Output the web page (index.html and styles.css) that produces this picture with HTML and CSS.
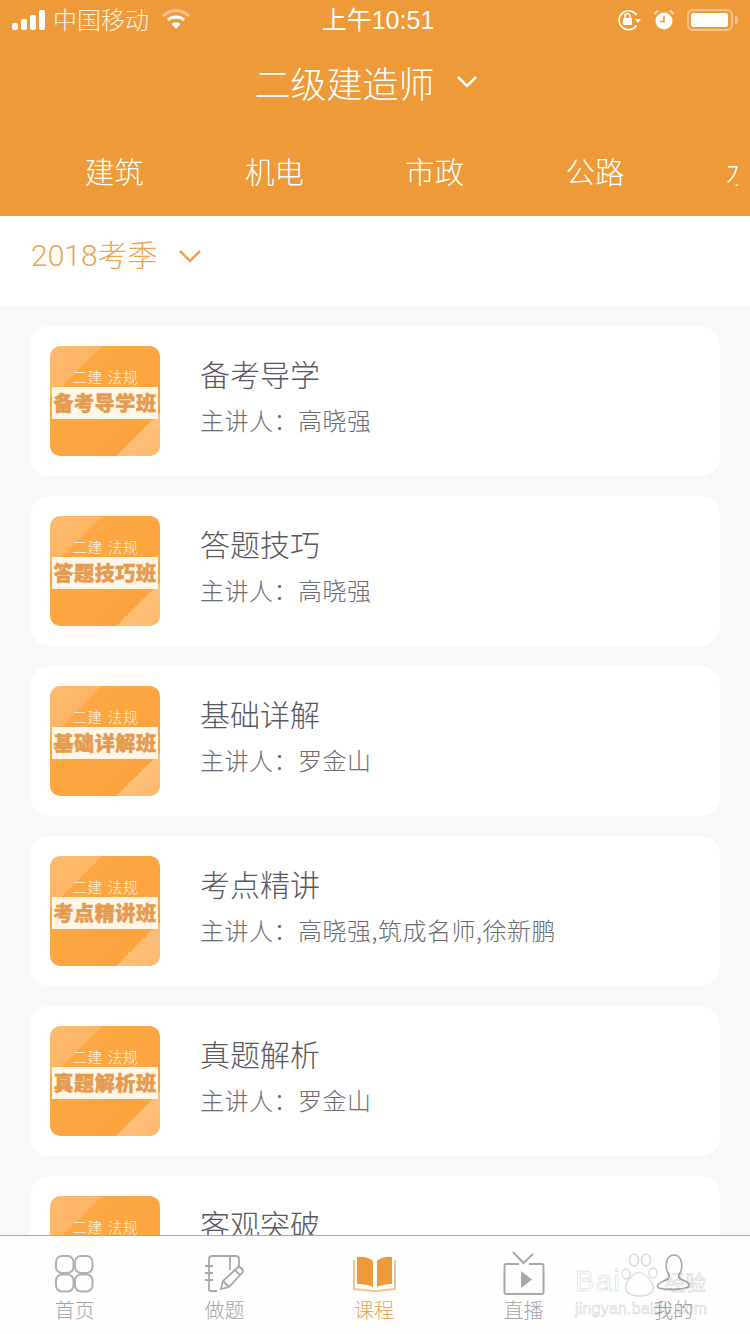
FILE: index.html
```html
<!DOCTYPE html>
<html>
  <head>
    <meta charset="UTF-8">
    <title>课程</title>
    <link rel="stylesheet" href="styles.css">
  </head>
  <body>
    <div class="page">
      <!-- Header -->
      <div class="header">
        <div class="status-bar">
          <div class="status-left">
            <svg class="signal" width="34" height="20" viewBox="0 0 34 20">
              <rect x="0" y="13" width="6" height="7" rx="2" fill="#fff"/>
              <rect x="9" y="9" width="6" height="11" rx="2" fill="#fff"/>
              <rect x="18" y="5" width="6" height="15" rx="2" fill="#fff"/>
              <rect x="27" y="0" width="6" height="20" rx="2" fill="#fff"/>
            </svg>
            <span class="carrier">中国移动</span>
            <svg class="wifi" width="28" height="22" viewBox="0 0 28 22">
              <path d="M1 7 C8 0 20 0 27 7" fill="none" stroke="#f6c491" stroke-width="3"/>
              <path d="M6 11 C10 7 18 7 22 11" fill="none" stroke="#fff" stroke-width="3"/>
              <path d="M9.500 15 C12 12.500 16 12.500 18.500 15 L14 20 Z" fill="#fff"/>
            </svg>
          </div>
          <div class="status-time">上午10:51</div>
          <div class="status-right">
            <svg width="24" height="24" viewBox="0 0 24 24">
              <path d="M19.500 7 A9.500 9.500 0 1 0 19.500 17.500" fill="none" stroke="#fff" stroke-width="1.600"/>
              <path d="M18 11 L24 11 L21 15 Z" fill="#fff"/>
              <rect x="6" y="10" width="9" height="7" rx="1" fill="#fff"/>
              <path d="M8 10 V8 A2.500 2.500 0 0 1 13 8 V10" fill="none" stroke="#fff" stroke-width="1.500"/>
            </svg>
            <svg width="22" height="22" viewBox="0 0 22 22">
              <circle cx="11" cy="12" r="8.500" fill="#fff"/>
              <path d="M11 7 V12.500 H7" fill="none" stroke="#ee9a38" stroke-width="1.600"/>
              <path d="M1.500 5 L5 1.500 M20.500 5 L17 1.500" stroke="#fbe3c8" stroke-width="2"/>
            </svg>
            <div class="battery"><div class="battery-fill"></div></div>
            <div class="battery-tip"></div>
          </div>
        </div>

        <div class="title-row">
          <span class="title">二级建造师</span>
          <svg class="title-arrow" width="22" height="14" viewBox="0 0 22 14">
            <path d="M2 2 L11 11 L20 2" fill="none" stroke="#fff" stroke-width="2.500"/>
          </svg>
        </div>

        <div class="tabs">
          <div class="tab">建筑</div>
          <div class="tab">机电</div>
          <div class="tab">市政</div>
          <div class="tab">公路</div>
          <div class="tab">水利</div>
        </div>
      </div>

      <!-- Season select -->
      <div class="season">
        <span class="season-text">2018考季</span>
        <svg width="24" height="14" viewBox="0 0 24 14">
          <path d="M2 2 L12 12 L22 2" fill="none" stroke="#eba450" stroke-width="2.500"/>
        </svg>
      </div>

      <!-- Course list -->
      <div class="list">
        <div class="card">
          <div class="thumb">
            <div class="thumb-top">二建 法规</div>
            <div class="thumb-band">备考导学班</div>
          </div>
          <div class="info">
            <div class="info-title">备考导学</div>
            <div class="info-sub">主讲人：高晓强</div>
          </div>
        </div>
        <div class="card">
          <div class="thumb">
            <div class="thumb-top">二建 法规</div>
            <div class="thumb-band">答题技巧班</div>
          </div>
          <div class="info">
            <div class="info-title">答题技巧</div>
            <div class="info-sub">主讲人：高晓强</div>
          </div>
        </div>
        <div class="card">
          <div class="thumb">
            <div class="thumb-top">二建 法规</div>
            <div class="thumb-band">基础详解班</div>
          </div>
          <div class="info">
            <div class="info-title">基础详解</div>
            <div class="info-sub">主讲人：罗金山</div>
          </div>
        </div>
        <div class="card">
          <div class="thumb">
            <div class="thumb-top">二建 法规</div>
            <div class="thumb-band">考点精讲班</div>
          </div>
          <div class="info">
            <div class="info-title">考点精讲</div>
            <div class="info-sub">主讲人：高晓强,筑成名师,徐新鹏</div>
          </div>
        </div>
        <div class="card">
          <div class="thumb">
            <div class="thumb-top">二建 法规</div>
            <div class="thumb-band">真题解析班</div>
          </div>
          <div class="info">
            <div class="info-title">真题解析</div>
            <div class="info-sub">主讲人：罗金山</div>
          </div>
        </div>
        <div class="card">
          <div class="thumb">
            <div class="thumb-top">二建 法规</div>
            <div class="thumb-band">客观突破班</div>
          </div>
          <div class="info">
            <div class="info-title">客观突破</div>
            <div class="info-sub">主讲人：高晓强</div>
          </div>
        </div>
      </div>

      <!-- Bottom nav -->
      <div class="nav">
        <div class="nav-item">
          <svg width="44" height="44" viewBox="0 0 44 44" fill="none" stroke="#b0b0b2" stroke-width="2">
            <rect x="3" y="5" width="17.500" height="17" rx="6"/>
            <rect x="22" y="5" width="17.500" height="17" rx="6"/>
            <rect x="3" y="23.500" width="17.500" height="17" rx="6"/>
            <rect x="22" y="23.500" width="17.500" height="17" rx="6"/>
          </svg>
          <span>首页</span>
        </div>
        <div class="nav-item">
          <svg width="44" height="44" viewBox="0 0 44 44" fill="none" stroke="#a8a8aa" stroke-width="1.800">
            <path d="M7 39 V8 Q7 5 10 5 H34 Q37 5 37 8 V16"/>
            <path d="M7 39 Q7 40 9 40 H15"/>
            <path d="M3 15 H11 M3 22 H11 M3 29 H11"/>
            <path d="M28 5 V19"/>
            <path d="M19 38 L21 30 L35 17 Q37 15 39 17 L40 18 Q42 20 40 22 L27 36 Z"/>
            <path d="M21 30 L27 36 M33 19 L38 24"/>
          </svg>
          <span>做题</span>
        </div>
        <div class="nav-item active">
          <svg width="44" height="44" viewBox="0 0 44 44">
            <path d="M2 9 V38 L21 40 H25 L43 38 V9" fill="none" stroke="#f3c68d" stroke-width="2"/>
            <path d="M5 6 Q15 5 21 10 V36 Q15 33 5 33 Z" fill="#ee9a38"/>
            <path d="M25 10 Q31 5 40 6 V33 Q31 33 25 36 Z" fill="#ee9a38"/>
          </svg>
          <span>课程</span>
        </div>
        <div class="nav-item">
          <svg width="44" height="44" viewBox="0 0 44 44" fill="none" stroke="#a8a8aa" stroke-width="2">
            <path d="M11 1 L21.500 12 L31 3"/>
            <path d="M17 13 H4 Q2.500 13 2.500 15 V41 Q2.500 43 4 43 H40 Q41.500 43 41.500 41 V15 Q41.500 13 40 13 H27"/>
            <path d="M19 20 L30 28.500 L19 37 Z" fill="#a8a8aa" stroke="none"/>
          </svg>
          <span>直播</span>
        </div>
        <div class="nav-item">
          <svg width="44" height="44" viewBox="0 0 44 44" fill="none" stroke="#a8a8aa" stroke-width="1.600">
            <path d="M18 24 C13 16 15 4 23 4 C31 4 33 16 28 24 C27 27 29 28 32 29 C37 31 40 34 37 36 C30 39 14 39 8 37 C4 35 9 31 15 29 C18 28 19 27 18 24 Z"/>
          </svg>
          <span>我的</span>
        </div>
      </div>

      <!-- Watermark -->
      <div class="watermark">
        <div class="wm-logo">
          <span class="wm-bai">Bai</span>
          <svg class="wm-paw" width="38" height="46" viewBox="0 0 38 46">
            <g fill="none" stroke="#d9d9d9" stroke-width="1.300">
              <ellipse cx="6" cy="22" rx="4" ry="5"/>
              <ellipse cx="14" cy="8" rx="4.500" ry="6"/>
              <ellipse cx="26" cy="8" rx="4.500" ry="6"/>
              <ellipse cx="33" cy="21" rx="4" ry="5"/>
              <path d="M19 20 C12 22 4 31 6 38 C9 46 30 46 33 38 C35 31 26 22 19 20 Z"/>
            </g>
            <text x="19" y="39" text-anchor="middle" class="wm-du">du</text>
          </svg>
          <span class="wm-cn">经验</span>
        </div>
        <div class="wm-url">jingyan.baidu.com</div>
      </div>
    </div>
  </body>
</html>
```

FILE: styles.css
```css
html,
body {
  margin: 0;
  padding: 0;
}
body {
  font-family: "Noto Sans CJK SC", "Liberation Sans", sans-serif;
  font-weight: 300;
  background-color: #f8f7fa;
}
.page {
  position: relative;
  width: 750px;
  height: 1334px;
  overflow: hidden;
  display: flex;
  flex-direction: column;
}

/* Header */
.header {
  background-color: #ee9a38;
  color: #fff;
  height: 216px;
  flex-shrink: 0;
}
.status-bar {
  height: 40px;
  display: flex;
  align-items: center;
  justify-content: space-between;
  padding: 0 12px;
  position: relative;
}
.status-left,
.status-right {
  display: flex;
  align-items: center;
}
.carrier {
  font-size: 24px;
  line-height: 40px;
  margin-left: 7px;
  color: #fdf1e2;
  position: relative;
  top: -1px;
}
.wifi {
  margin-left: 13px;
}
.status-time {
  position: absolute;
  left: 0;
  right: 0;
  text-align: center;
  font-family: "Liberation Sans", "Noto Sans CJK SC", sans-serif;
  font-weight: 400;
  font-size: 25px;
  line-height: 40px;
  padding-left: 6px;
}
.status-right {
  gap: 12px;
}
.battery {
  box-sizing: border-box;
  width: 46px;
  height: 22px;
  border: 2px solid #f6c491;
  border-radius: 6px;
  padding: 2px 3px 2px 2px;
}
.battery-fill {
  width: 100%;
  height: 100%;
  background-color: #fff;
  border-radius: 2px;
}
.battery-tip {
  width: 3px;
  height: 8px;
  background-color: #f6c491;
  border-radius: 0 2px 2px 0;
  margin-left: -10px;
}
.title-row {
  box-sizing: border-box;
  height: 88px;
  display: flex;
  align-items: center;
  justify-content: center;
  padding: 0 18px 4px 0;
}
.title {
  font-size: 36px;
  line-height: 84px;
  margin-right: 21px;
}
.tabs {
  display: flex;
  height: 88px;
  margin-right: 12px;
  padding-left: 34px;
  overflow: hidden;
}
.tab {
  flex: 0 0 160.300px;
  text-align: center;
  font-size: 29.500px;
  line-height: 85px;
}

/* Season */
.season {
  box-sizing: border-box;
  height: 90px;
  flex-shrink: 0;
  background-color: #fff;
  color: #eba450;
  display: flex;
  align-items: center;
  padding: 0 0 10px 31px;
  gap: 20px;
}
.season-text {
  font-family: Roboto, "Noto Sans CJK SC", sans-serif;
  font-size: 30px;
  line-height: 40px;
}

/* List */
.list {
  padding: 20px 30px 0;
  display: flex;
  flex-direction: column;
  gap: 20px;
}
.card {
  height: 150px;
  flex-shrink: 0;
  background-color: #fff;
  border-radius: 20px;
  display: flex;
  align-items: center;
  padding-left: 20px;
}
.thumb {
  width: 110px;
  height: 110px;
  border-radius: 10px;
  flex-shrink: 0;
  overflow: hidden;
  background: linear-gradient(135deg, #fdbb6e 0, #fdb565 24%, #fda844 24%, #fca33e 80%, #fdbf78 80%, #fdb96c 100%);
  display: flex;
  flex-direction: column;
  align-items: center;
}
.thumb-top {
  margin-top: 21px;
  height: 20px;
  font-size: 15px;
  line-height: 20px;
  word-spacing: 2px;
  color: #ffeedb;
}
.thumb-band {
  width: 106px;
  height: 32px;
  background-color: #fff6e8;
  color: #e59b4f;
  font-size: 20px;
  font-weight: 900;
  letter-spacing: 0.600px;
  line-height: 32px;
  text-align: center;
  white-space: nowrap;
  -webkit-text-stroke: 0.500px #e59b4f;
}
.info {
  margin-left: 40px;
  padding-bottom: 13px;
}
.info-title {
  font-size: 30px;
  line-height: 44px;
  color: #58585e;
}
.info-sub {
  font-size: 24px;
  line-height: 36px;
  margin-top: 7px;
  letter-spacing: 0.500px;
  color: #6b6b70;
}

/* Bottom nav */
.nav {
  position: absolute;
  left: 0;
  right: 0;
  bottom: 0;
  height: 98px;
  border-top: 1px solid #a9a9a9;
  background-color: #fefefe;
  display: flex;
  padding-right: 2px;
}
.nav-item {
  flex: 1;
  display: flex;
  flex-direction: column;
  align-items: center;
  color: #a3a3a5;
  font-size: 20px;
  padding-top: 15px;
}
.nav-item span {
  line-height: 28px;
  margin-top: 1px;
}
.nav-item.active {
  color: #eba450;
}

/* Watermark */
.watermark {
  position: absolute;
  left: 575px;
  top: 1252px;
  width: 136px;
  color: transparent;
  font-family: "Liberation Sans", "Noto Sans CJK SC", sans-serif;
  font-weight: 400;
  -webkit-text-stroke: 1px rgba(0, 0, 0, 0.13);
}
.wm-logo {
  display: flex;
  align-items: flex-end;
  height: 46px;
}
.wm-bai {
  width: 45px;
  font-size: 29px;
  line-height: 34px;
  letter-spacing: 1.500px;
}
.wm-du {
  font-size: 16px;
  fill: transparent;
}
.wm-cn {
  font-size: 21px;
  line-height: 30px;
  margin-left: 6px;
  white-space: nowrap;
}
.wm-url {
  font-size: 16px;
  line-height: 20px;
  margin-top: 1px;
  letter-spacing: 0.200px;
  white-space: nowrap;
}
```
